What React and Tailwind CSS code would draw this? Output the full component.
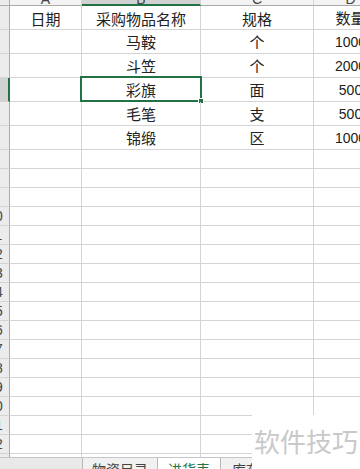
import React from "react";

const data = [
  { n: 1, a: "日期", b: "采购物品名称", c: "规格", d: "数量", h: 24 },
  { n: 2, a: "", b: "马鞍", c: "个", d: "1000", h: 24 },
  { n: 3, a: "", b: "斗笠", c: "个", d: "2000", h: 24 },
  { n: 4, a: "", b: "彩旗", c: "面", d: "500", h: 24, sel: true },
  { n: 5, a: "", b: "毛笔", c: "支", d: "500", h: 24 },
  { n: 6, a: "", b: "锦缎", c: "区", d: "1000", h: 24 },
];
for (let i = 7; i <= 23; i++) data.push({ n: i, a: "", b: "", c: "", d: "", h: 19 });

const cell = "shrink-0 border-r border-b border-[#d4d4d4] flex items-center justify-center";

function Row({ r }) {
  return (
    <div className="flex shrink-0" style={{ height: r.h }}>
      <div
        className={
          "shrink-0 w-[10px] overflow-hidden border-b border-[#d4d4d4] flex items-center " +
          (r.sel ? "bg-[#d2d2d2] border-r-2 border-r-[#217346]" : "bg-[#ececec] border-r border-r-[#ababab]")
        }
      >
        <div className="shrink-0 -ml-[20px] w-[30px] text-center text-[14px] leading-[16px] text-[#444] font-['Liberation_Sans',sans-serif]">
          {r.n >= 10 ? r.n : ""}
        </div>
      </div>
      <div className={cell + " w-[72px] pt-[2px]"}>{r.a}</div>
      <div className={cell + " w-[119px] relative" + (r.n === 1 ? " pt-[2px]" : "")}>
        {r.b}
        {r.sel && (
          <>
            <div className="absolute -left-[2px] -top-[2px] w-[122px] h-[26px] border-2 border-[#217346]" />
            <div className="absolute left-[116px] top-[20px] w-[6px] h-[6px] bg-[#217346] border border-white" />
          </>
        )}
      </div>
      <div className={cell + " w-[113px]" + (r.n === 1 ? " pt-[2px]" : "")}>{r.c}</div>
      <div className={cell + " w-[74px] font-['Liberation_Sans','Noto_Sans_CJK_SC',sans-serif] text-[14px]" + (r.n === 1 ? " pt-[2px] text-[15px]" : "")}>
        {r.d}
      </div>
    </div>
  );
}

export default function App() {
  return (
    <div className="relative w-[360px] h-[469px] overflow-hidden bg-white flex flex-col font-['Noto_Sans_CJK_SC',sans-serif] text-[15px] text-[#222] leading-none">
      {/* column headers */}
      <div className="flex shrink-0 h-[6px] font-['Liberation_Sans',sans-serif] text-[14px] text-[#444]">
        <div className="shrink-0 w-[10px] bg-[#ececec] border-r border-b border-[#ababab]" />
        {[
          ["A", "w-[72px] bg-[#f3f3f3] border-b border-[#ababab]"],
          ["B", "w-[119px] bg-[#d2d2d2] border-b-2 border-[#217346]"],
          ["C", "w-[113px] bg-[#f3f3f3] border-b border-[#ababab]"],
          ["D", "w-[74px] bg-[#f3f3f3] border-b border-[#ababab]"],
        ].map(([l, c]) => (
          <div key={l} className={"shrink-0 overflow-hidden border-r border-r-[#d4d4d4] " + c}>
            <div className="-mt-[8px] leading-[14px] text-center">{l}</div>
          </div>
        ))}
      </div>
      <div className="flex flex-col flex-1 overflow-hidden">
        {data.map((r) => (
          <Row key={r.n} r={r} />
        ))}
      </div>
      {/* sheet tabs */}
      <div className="absolute left-0 right-0 top-[457px] h-[12px] bg-[#e9e9e9] border-t border-[#c6c6c6] flex text-[14px] leading-[14px] text-[#444] overflow-hidden">
        <div className="shrink-0 w-[82px]" />
        <div className="shrink-0 w-[76px] bg-[#f1f1f1] border-x border-[#b8b8b8] pl-[9px] pt-[4px]">物资目录</div>
        <div className="shrink-0 w-[62px] bg-white pl-[10px] pt-[4px] text-[#217346]">进货表</div>
        <div className="shrink-0 w-[60px] bg-[#f1f1f1] border-l border-[#b8b8b8] pl-[11px] pt-[4px]">库存</div>
      </div>
      {/* watermark */}
      <div className="absolute left-[252px] top-[415px] right-0 bottom-0 bg-white pl-[2px] pt-[13px] text-[26px] leading-none text-[#c9c9c9] whitespace-nowrap">
        软件技巧
      </div>
    </div>
  );
}
